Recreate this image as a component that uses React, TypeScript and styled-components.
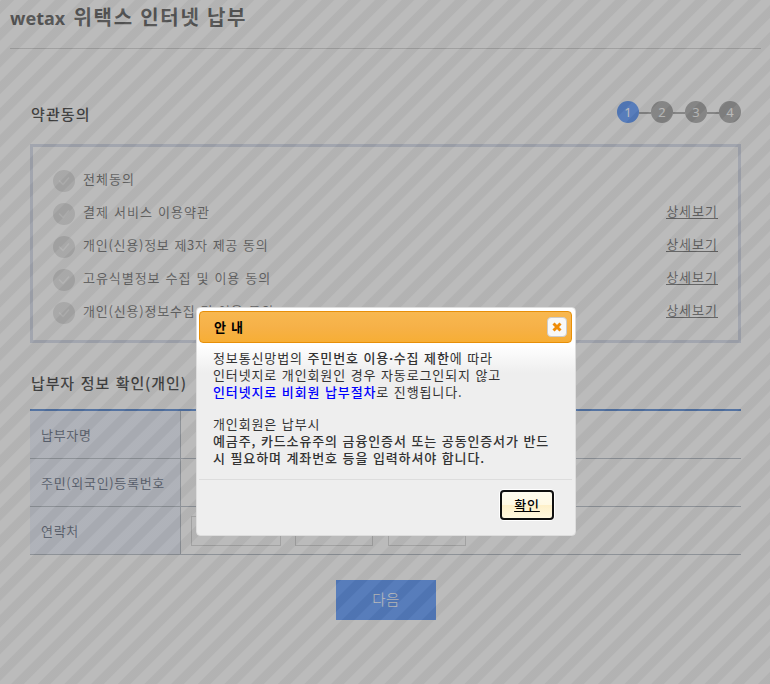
import React from 'react';
import styled, { createGlobalStyle } from 'styled-components';

const Global = createGlobalStyle`
  * { box-sizing: border-box; }
  html, body { margin: 0; padding: 0; background: #fff; }
  body { font-family: "Noto Sans CJK KR", sans-serif; font-size: 13px; color: #555; overflow: hidden; }
`;

const Page = styled.div`
  position: relative;
  width: 770px;
  height: 684px;
  overflow: hidden;
`;

const Header = styled.header`
  margin: 0 9px 0 10px;
  height: 49px;
  border-bottom: 1px solid #cacaca;
`;

const Title = styled.h1`
  margin: 0;
  padding-top: 4px;
  font-size: 20px;
  line-height: 26px;
  font-weight: 700;
  color: #3a3a3a;
  letter-spacing: 1.75px;
`;

const Latin = styled.span`
  margin-right: 2px;
  font-family: "Noto Sans", sans-serif;
  font-size: 18px;
  font-weight: 700;
  letter-spacing: 0;
`;

const Content = styled.main`
  margin: 0 29px 0 30px;
`;

const StepHeader = styled.div`
  display: flex;
  justify-content: space-between;
  height: 95px;
  padding-top: 52px;
`;

const SectionTitle = styled.h2`
  margin: 0;
  padding: 2px 0 0 1px;
  font-size: 15px;
  line-height: 21px;
  font-weight: 500;
  color: #111;
  letter-spacing: 1.1px;
`;

const Steps = styled.ol`
  display: flex;
  gap: 12px;
  list-style: none;
  margin: 0;
  padding: 0;
  height: 22px;

  li + li::before {
    content: '';
    position: absolute;
    left: -12px;
    top: 11px;
    width: 12px;
    height: 2px;
    background: #949494;
  }
`;

const Step = styled.li<{ $active?: boolean }>`
  position: relative;
  width: 22px;
  height: 22px;
  border-radius: 50%;
  background: ${(p) => (p.$active ? '#3883ff' : '#949494')};
  color: #fff;
  font: 13px/23px "Noto Sans", sans-serif;
  text-align: center;
`;

const Terms = styled.section`
  height: 199px;
  border: 3px solid #cdd4e6;
  padding: 16px 20px 0;
`;

const Term = styled.div`
  display: flex;
  align-items: flex-start;
  height: 33px;
  line-height: 31px;
`;

const Check = styled.svg`
  width: 22px;
  height: 22px;
  margin: 7px 8px 0 0;
`;

const TermName = styled.span<{ $spacing: number }>`
  flex: 1;
  letter-spacing: ${(p) => p.$spacing}px;
  word-spacing: 1.2px;
`;

const Detail = styled.a`
  color: #555;
  letter-spacing: 1px;
  border-bottom: 1px solid #555;
  line-height: 16px;
  height: 16px;
  margin-top: 7px;
`;

const PayerTitle = styled(SectionTitle)`
  padding-top: 29px;
  height: 66px;
  letter-spacing: 0.88px;
  word-spacing: 1.4px;
`;

const Table = styled.div`
  border-top: 2px solid #3370cc;
`;

const Row = styled.div`
  display: flex;
  height: 48px;
  border-bottom: 1px solid #a4adb8;
`;

const RowLabel = styled.div`
  width: 151px;
  padding-left: 11px;
  line-height: 47px;
  letter-spacing: 0.68px;
  color: #47536b;
  background: #e8eefc;
  border-right: 1px solid #a4adb8;
`;

const Fields = styled.div`
  display: flex;
  gap: 14px;
  padding: 9px 0 0 10px;
`;

const Field = styled.span<{ $w: number }>`
  width: ${(p) => p.$w}px;
  height: 30px;
  border: 1px solid #ccc;
  &:last-child { margin-left: 1px; }
`;

const Next = styled.button`
  display: block;
  width: 100px;
  height: 40px;
  margin: 25px auto 0 306px;
  padding: 0 0 2px;
  border: 0;
  background: #3883ff;
  color: #fff;
  font: 300 14.5px/34px "Noto Sans CJK KR", sans-serif;
  letter-spacing: 0.5px;
`;

const Overlay = styled.div`
  position: absolute;
  inset: 0;
  opacity: 0.5;
  background: repeating-linear-gradient(135deg, #777 0, #777 0.6px, #666 1.6px, #666 9.6px, #777 10.6px, #777 18.86px);
`;

const Dialog = styled.div`
  position: absolute;
  left: 196px;
  top: 307px;
  width: 380px;
  height: 229px;
  padding: 3px 3px 3px 2px;
  border: 1px solid #ddd;
  border-radius: 4px;
  background: linear-gradient(#fff 0, #fff 37px, #eee 65px);
  color: #333;
`;

const DialogHeader = styled.div`
  display: flex;
  align-items: center;
  justify-content: space-between;
  height: 32px;
  padding: 0 4px 0 14px;
  border: 1px solid #e78f08;
  border-radius: 4px;
  background: linear-gradient(#f8b850, #f6b148 50%, #f7ae35);
  color: #000;
`;

const DialogTitle = styled.span`
  font-weight: 700;
  line-height: 20px;
  padding-bottom: 1px;
  letter-spacing: 0.8px;
  word-spacing: 0.5px;
`;

const Close = styled.span`
  display: flex;
  width: 20px;
  height: 20px;
  border: 1px solid #ccc;
  border-radius: 4px;
  background: #f8f8f8;
  align-items: center;
  justify-content: center;
`;

const Message = styled.div`
  height: 137px;
  padding: 6px 0 0 14px;
  line-height: 17px;
  letter-spacing: 0.87px;
  word-spacing: 0.9px;
  border-bottom: 1px solid #ddd;
`;

const Line = styled.div<{ $bold?: boolean; $gap?: boolean }>`
  height: 17px;
  white-space: nowrap;
  font-weight: ${(p) => (p.$bold ? 500 : 400)};
  margin-top: ${(p) => (p.$gap ? 15 : 0)}px;
  b { font-weight: 500; }
`;

const Dot = styled.span`
  font-family: "Noto Sans", sans-serif;
  font-weight: 700;
  line-height: 1;
`;

const Blue = styled.b`
  color: #00f;
`;

const Confirm = styled.button`
  display: block;
  width: 54px;
  height: 30px;
  margin: 10px 18px 0 auto;
  padding: 0;
  border: 2px solid #101010;
  border-radius: 4px;
  box-shadow: 0 0 0 1px #fff;
  background: linear-gradient(#fffcef 0, #fff9e3 50%, #fef0c8 50%, #fff8df);
  color: #000;
  font: 500 13px/24px "Noto Sans CJK KR", sans-serif;
  letter-spacing: 0.9px;
  text-decoration: underline;
`;

const terms = [
  { name: '전체동의', spacing: 1, detail: false },
  { name: '결제 서비스 이용약관', spacing: 1, detail: true },
  { name: '개인(신용)정보 제3자 제공 동의', spacing: 0.75, detail: true },
  { name: '고유식별정보 수집 및 이용 동의', spacing: 0.95, detail: true },
  { name: '개인(신용)정보수집 및 이용 동의', spacing: 0.8, detail: true },
];

export default function App() {
  return (
    <Page>
      <Global />
      <Header><Title><Latin>wetax</Latin> 위택스 인터넷 납부</Title></Header>
      <Content>
        <StepHeader>
          <SectionTitle>약관동의</SectionTitle>
          <Steps>
            {[1, 2, 3, 4].map((n) => <Step key={n} $active={n === 1}>{n}</Step>)}
          </Steps>
        </StepHeader>
        <Terms>
          {terms.map(({ name, spacing, detail }) => (
            <Term key={name}>
              <Check viewBox="0 0 22 22">
                <circle cx="11" cy="11" r="11" fill="#dadada" />
                <path d="M6 10.5l4 4 6-7" fill="none" stroke="#f0f0f0" strokeWidth="1.4" />
              </Check>
              <TermName $spacing={spacing}>{name}</TermName>
              {detail && <Detail>상세보기</Detail>}
            </Term>
          ))}
        </Terms>
        <PayerTitle>납부자 정보 확인(개인)</PayerTitle>
        <Table>
          <Row><RowLabel>납부자명</RowLabel></Row>
          <Row><RowLabel>주민(외국인)등록번호</RowLabel></Row>
          <Row>
            <RowLabel>연락처</RowLabel>
            <Fields><Field $w={90} /><Field $w={78} /><Field $w={78} /></Fields>
          </Row>
        </Table>
        <Next>다음</Next>
      </Content>
      <Overlay />
      <Dialog role="dialog">
        <DialogHeader>
          <DialogTitle>안 내</DialogTitle>
          <Close>
            <svg width="12" height="12" viewBox="0 0 12 12">
              <path d="M2.5 2.5l7 7M9.5 2.5l-7 7" stroke="#ef8c08" strokeWidth="3" />
            </svg>
          </Close>
        </DialogHeader>
        <Message>
          <Line>정보통신망법의 <b>주민번호 이용<Dot>·</Dot>수집 제한</b>에 따라</Line>
          <Line>인터넷지로 개인회원인 경우 자동로그인되지 않고</Line>
          <Line><Blue>인터넷지로 비회원 납부절차</Blue>로 진행됩니다.</Line>
          <Line $gap>개인회원은 납부시</Line>
          <Line $bold>예금주, 카드소유주의 금융인증서 또는 공동인증서가 반드</Line>
          <Line $bold>시 필요하며 계좌번호 등을 입력하셔야 합니다.</Line>
        </Message>
        <Confirm>확인</Confirm>
      </Dialog>
    </Page>
  );
}
